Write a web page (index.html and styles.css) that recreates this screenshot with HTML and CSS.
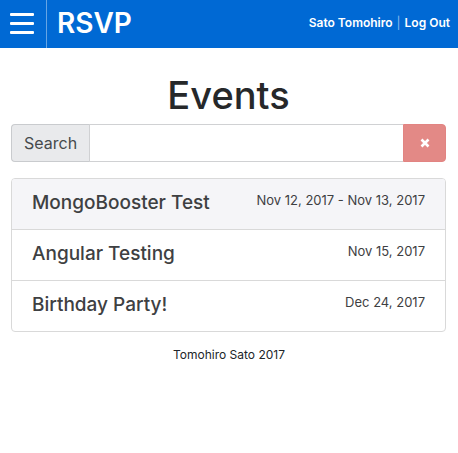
FILE: index.html
```html
<!DOCTYPE html>
<html lang="en">
<head>
<meta charset="utf-8">
<meta name="viewport" content="width=device-width, initial-scale=1">
<title>RSVP</title>
<link rel="stylesheet" href="styles.css">
</head>
<body>
<header class="header">
  <button class="menu" type="button" aria-label="Menu"><span class="bar"></span><span class="bar"></span><span class="bar"></span></button>
  <a class="brand" href="#">RSVP</a>
  <nav class="account"><a href="#">Sato Tomohiro</a><span class="divider">|</span><a href="#">Log Out</a></nav>
</header>
<main class="content">
  <h1 class="title">Events</h1>
  <form class="search">
    <label class="search-label" for="search">Search</label>
    <input class="search-input" id="search" type="text">
    <button class="search-clear" type="button" aria-label="Clear">
      <svg width="10" height="10" viewBox="0 0 10 10"><path d="M1.5 1.5L8.5 8.5M8.5 1.5L1.5 8.5" stroke="currentColor" stroke-width="2.6"/></svg>
    </button>
  </form>
  <div class="events">
    <a class="event active" href="#"><span class="name">MongoBooster Test</span><span class="date">Nov 12, 2017 - Nov 13, 2017</span></a>
    <a class="event" href="#"><span class="name">Angular Testing</span><span class="date">Nov 15, 2017</span></a>
    <a class="event" href="#"><span class="name">Birthday Party!</span><span class="date">Dec 24, 2017</span></a>
  </div>
</main>
<footer class="footer">Tomohiro Sato 2017</footer>
</body>
</html>
```
FILE: styles.css
```css
* { box-sizing: border-box; }
body {
  margin: 0;
  background: #fff;
  color: #212529;
  font-family: Inter, "Liberation Sans", sans-serif;
  font-size: 16px;
  line-height: 24px;
}
a { color: inherit; text-decoration: none; }
.header {
  display: flex;
  align-items: center;
  height: 48px;
  padding-right: 8px;
  background: #0069d4;
  color: #fff;
}
.menu {
  display: flex;
  flex-direction: column;
  justify-content: center;
  gap: 6px;
  width: 47px;
  height: 48px;
  padding: 0 12px 2px 10px;
  border: 0;
  border-right: 1px solid #66a5e5;
  background: none;
}
.bar { width: 24px; height: 3px; border-radius: 1px; background: #fff; }
.brand { margin-left: 10px; padding-bottom: 2px; font-size: 28px; font-weight: 600; }
.account { display: flex; gap: 4px; margin-left: auto; padding-bottom: 2px; font-size: 12px; font-weight: 600; }
.divider { color: #8dbcec; font-weight: 400; }
.content { padding: 23px 12px 0 11px; }
.title { margin: 0 0 5px; color: #26282a; font-size: 38px; font-weight: 500; line-height: 48px; text-align: center; }
.search { display: flex; height: 38px; margin-bottom: 16px; }
.search-label {
  padding: 6px 12px;
  border: 1px solid #c9cbce;
  border-right: 0;
  border-radius: 4px 0 0 4px;
  background: #e9eaec;
  color: #464a4c;
}
.search-input {
  flex: 1;
  min-width: 0;
  padding: 6px 12px;
  border: 1px solid #d0d1d3;
  border-right: 0;
  border-radius: 0;
  font: inherit;
}
.search-clear {
  display: flex;
  align-items: center;
  justify-content: center;
  width: 43px;
  padding: 0;
  border: 1px solid #e28482;
  border-radius: 0 4px 4px 0;
  background: #e38986;
  color: #fff;
}
.events { border: 1px solid #d9d9d9; border-radius: 4px; overflow: hidden; }
.event {
  display: flex;
  justify-content: space-between;
  padding: 11px 20px 13px;
  color: #3e4042;
}
.event + .event { border-top: 1px solid #d9d9d9; }
.active { background: #f5f5f8; }
.name { font-size: 19px; font-weight: 500; line-height: 26px; }
.date { font-size: 13px; line-height: 20px; }
.footer { margin-top: 11px; font-size: 12px; text-align: center; }
```
